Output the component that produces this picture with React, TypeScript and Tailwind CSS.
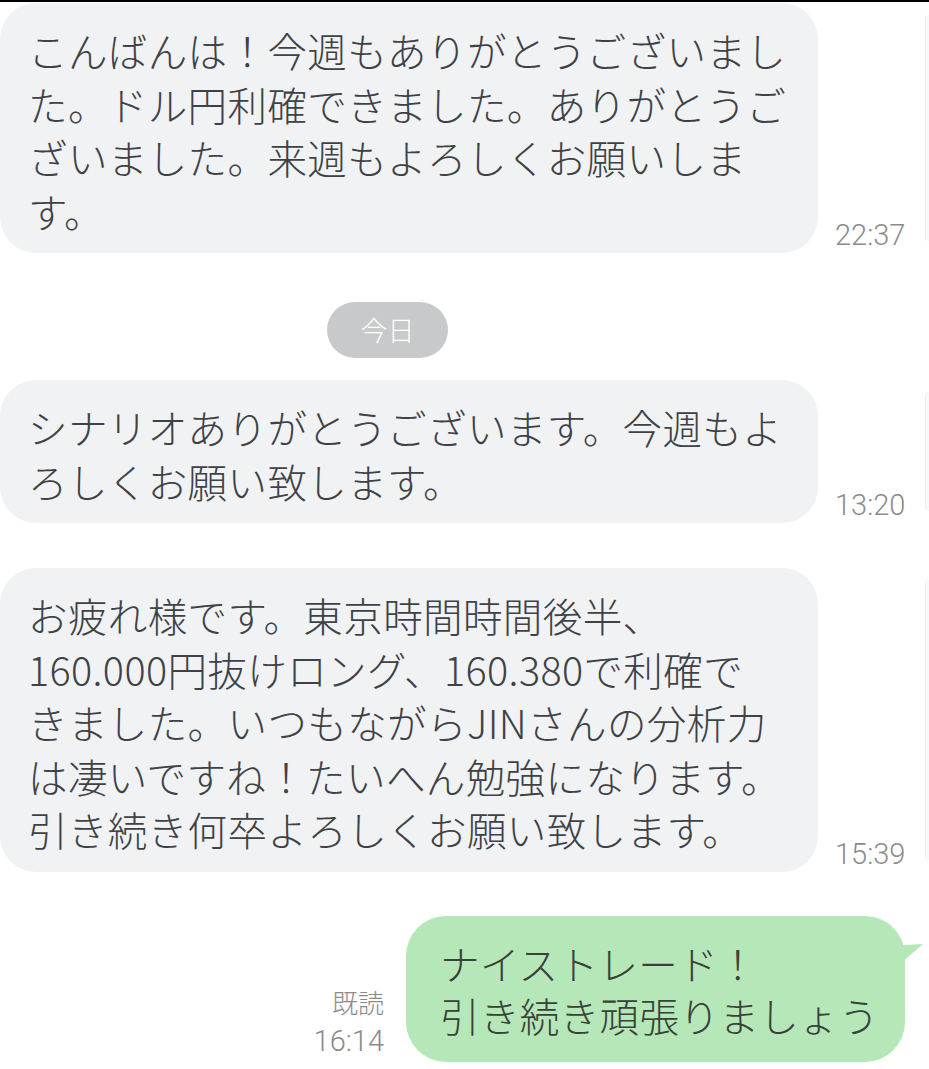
import React from 'react'

// Chat history (LINE style) — explicit line breaks keep the wrapping of the capture
const jp = "font-['Noto_Sans_CJK_JP','Noto_Sans',sans-serif]"

type Msg = { lines: string[]; time: string }

const received: Msg[] = [
  {
    lines: [
      'こんばんは！今週もありがとうございまし',
      'た。ドル円利確できました。ありがとうご',
      'ざいました。来週もよろしくお願いしま',
      'す。',
    ],
    time: '22:37',
  },
]

const today: Msg[] = [
  {
    lines: ['シナリオありがとうございます。今週もよ', 'ろしくお願い致します。'],
    time: '13:20',
  },
  {
    lines: [
      'お疲れ様です。東京時間時間後半、',
      '160.000円抜けロング、160.380で利確で',
      'きました。いつもながらJINさんの分析力',
      'は凄いですね！たいへん勉強になります。',
      '引き続き何卒よろしくお願い致します。',
    ],
    time: '15:39',
  },
]

const Bubble: React.FC<{ msg: Msg; className?: string }> = ({ msg, className = '' }) => (
  <div className={`flex items-stretch ${className}`}>
    <div className="w-[818px] shrink-0 rounded-[36px] bg-[#f1f2f4] pl-[28px] pr-[20px] pt-[20px] pb-[16px]">
      {msg.lines.map((l, i) => (
        <div key={i} className="whitespace-nowrap font-light tracking-[0.4px] text-[39.5px] leading-[53.5px] text-[#3e4246]">
          {l}
        </div>
      ))}
    </div>
    <div className="ml-[17px] self-end pb-[3px] font-['Roboto',sans-serif] text-[29px] font-light leading-none text-[#8c8c8c]">
      {msg.time}
    </div>
    <div className="ml-auto my-[12px] w-[4px] rounded-l-[8px] border-l border-[#eceef0] bg-[#f8f9fa]" />
  </div>
)

export default function App() {
  return (
    <div className={`w-[929px] h-[1069px] overflow-hidden bg-white border-t-2 border-black ${jp}`}>
      <div className="pt-[1px]">
        {received.map((m, i) => (
          <Bubble key={i} msg={m} />
        ))}
      </div>

      {/* date separator */}
      <div className="mt-[49px] ml-[327px] flex h-[56px] w-[121px] items-center justify-center rounded-full bg-[#c8c9ca] text-[27px] font-light text-white">
        今日
      </div>

      <div className="mt-[22px] flex flex-col gap-[45px]">
        {today.map((m, i) => (
          <Bubble key={i} msg={m} />
        ))}
      </div>

      {/* sent message */}
      <div className="mt-[44px] flex items-end">
        <div className="w-[384px] shrink-0 pb-[2px] text-right text-[#8a8a8a]">
          <div className="text-[26px] font-light leading-[40px]">既読</div>
          <div className="font-['Roboto',sans-serif] text-[29px] font-light leading-[38px]">16:14</div>
        </div>
        <div className="relative ml-[22px] w-[499px] rounded-[40px] bg-[#b6e7b8] pl-[34px] pt-[21px] pb-[21px]">
          <div className="whitespace-nowrap font-light tracking-[0.4px] text-[39.5px] leading-[52px] text-[#394239]">ナイストレード！</div>
          <div className="whitespace-nowrap font-light tracking-[0.4px] text-[39.5px] leading-[52px] text-[#394239]">引き続き頑張りましょう</div>
          <svg className="absolute right-[-18px] top-[22px]" width="34" height="30" viewBox="0 0 34 30">
            <path d="M0 8 L34 6 Q18 20 6 30 Z" fill="#b6e7b8" />
          </svg>
        </div>
      </div>
    </div>
  )
}
